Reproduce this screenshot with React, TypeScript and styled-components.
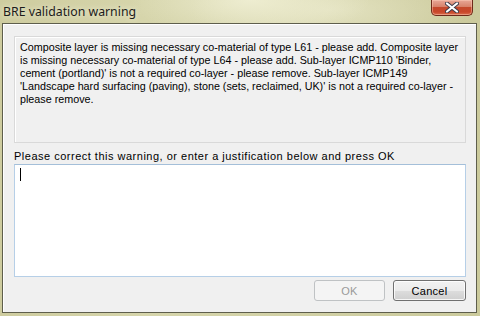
import styled, { createGlobalStyle } from 'styled-components';

const message = [
  'Composite layer is missing necessary co-material of type L61 - please add. Composite layer',
  "is missing necessary co-material of type L64 - please add. Sub-layer ICMP110 'Binder,",
  "cement (portland)' is not a required co-layer - please remove. Sub-layer ICMP149",
  "'Landscape hard surfacing (paving), stone (sets, reclaimed, UK)' is not a required co-layer -",
  'please remove.',
];

const GlobalStyle = createGlobalStyle`
  html, body {
    margin: 0;
    padding: 0;
    background: #fff;
  }
`;

const Window = styled.div`
  position: relative;
  width: 480px;
  height: 316px;
  box-sizing: border-box;
  padding: 0 3px 3px 2px;
  display: flex;
  flex-direction: column;
  overflow: hidden;
  background:
    radial-gradient(ellipse 120px 40px at 250px 0px, rgba(240, 239, 212, 0.9), rgba(240, 239, 212, 0) 100%),
    radial-gradient(ellipse 140px 40px at 330px 10px, rgba(232, 231, 200, 0.8), rgba(232, 231, 200, 0) 100%),
    linear-gradient(90deg, #cecc9f 0%, #d6d5ab 30%, #d2d1a6 60%, #cbca9c 100%);
  font-family: 'Liberation Sans', Arial, sans-serif;
`;

const TitleBar = styled.div`
  height: 23px;
  flex: 0 0 23px;
  display: flex;
  align-items: flex-start;
  justify-content: space-between;
`;

const Title = styled.div`
  margin: 4px 0 0 1px;
  font-family: 'Noto Sans', 'Open Sans', sans-serif;
  font-size: 12.3px;
  line-height: 16px;
  color: #1b1b1b;
  text-shadow: 0 0 6px rgba(255, 255, 240, 0.9);
`;

const CloseButton = styled.div`
  width: 42px;
  height: 16px;
  margin-right: 4px;
  box-sizing: border-box;
  border: 1px solid #6e2a1a;
  border-top: none;
  border-radius: 0 0 5px 5px;
  display: flex;
  align-items: center;
  justify-content: center;
  background: linear-gradient(180deg, #e8a797 0%, #d7826b 45%, #c4492c 50%, #c9472a 80%, #d9704f 100%);
  box-shadow: inset 0 0 0 1px rgba(255, 210, 190, 0.45);
`;

const Client = styled.div`
  flex: 1;
  display: flex;
  flex-direction: column;
  padding: 12px 10px 11px 11px;
  background: #f0f0f0;
  border: 1px solid #5e5e4c;
  box-shadow: inset 1px 1px 0 #ffffff;
`;

const MessageBox = styled.div`
  height: 107px;
  box-sizing: border-box;
  padding: 4px 5px;
  background: #f0f0f0;
  border: 1px solid #d9d9d9;
  box-shadow: inset 1px 1px 0 #ffffff;
  color: #000;
  font-size: 10.75px;
  line-height: 13px;
  white-space: pre;
`;

const Label = styled.div`
  margin-top: 6px;
  height: 15px;
  font-size: 11px;
  letter-spacing: 0.5px;
  line-height: 14px;
  color: #000;
  white-space: nowrap;
`;

const TextBox = styled.div`
  height: 113px;
  box-sizing: border-box;
  padding: 3px 5px;
  background: #fff;
  border: 1px solid #b6cfe7;
  border-top-color: #a4bfd9;
`;

const Caret = styled.div`
  width: 1px;
  height: 13px;
  background: #000;
`;

const Buttons = styled.div`
  margin-top: 3px;
  display: flex;
  justify-content: flex-end;
  gap: 8px;
`;

const Button = styled.div<{ $disabled?: boolean }>`
  width: ${(p) => (p.$disabled ? '71px' : '73px')};
  height: 21px;
  box-sizing: border-box;
  display: flex;
  align-items: center;
  justify-content: center;
  border-radius: 3px;
  font-size: 11px;
  letter-spacing: 0.3px;
  border: 1px solid ${(p) => (p.$disabled ? '#bfc2c4' : '#707070')};
  color: ${(p) => (p.$disabled ? '#9a9a9a' : '#000')};
  background: ${(p) =>
    p.$disabled
      ? '#f4f4f4'
      : 'linear-gradient(180deg, #f2f2f2 0%, #ebebeb 50%, #dddddd 51%, #cfcfcf 100%)'};
  box-shadow: ${(p) => (p.$disabled ? 'none' : 'inset 0 0 0 1px rgba(255,255,255,0.8)')};
`;

const App = () => {
  return (
    <>
      <GlobalStyle />
      <Window>
        <TitleBar>
          <Title>BRE validation warning</Title>
          <CloseButton>
            <svg width="14" height="11" viewBox="0 0 14 11">
              <path
                d="M2 1.5 L12 9.5 M12 1.5 L2 9.5"
                stroke="#3b3b4a"
                strokeWidth="4"
                strokeLinecap="round"
              />
              <path
                d="M2 1.5 L12 9.5 M12 1.5 L2 9.5"
                stroke="#ffffff"
                strokeWidth="2.2"
                strokeLinecap="round"
              />
            </svg>
          </CloseButton>
        </TitleBar>
        <Client>
          <MessageBox>{message.join('\n')}</MessageBox>
          <Label>Please correct this warning, or enter a justification below and press OK</Label>
          <TextBox>
            <Caret />
          </TextBox>
          <Buttons>
            <Button $disabled>OK</Button>
            <Button>Cancel</Button>
          </Buttons>
        </Client>
      </Window>
    </>
  );
};

export default App;
